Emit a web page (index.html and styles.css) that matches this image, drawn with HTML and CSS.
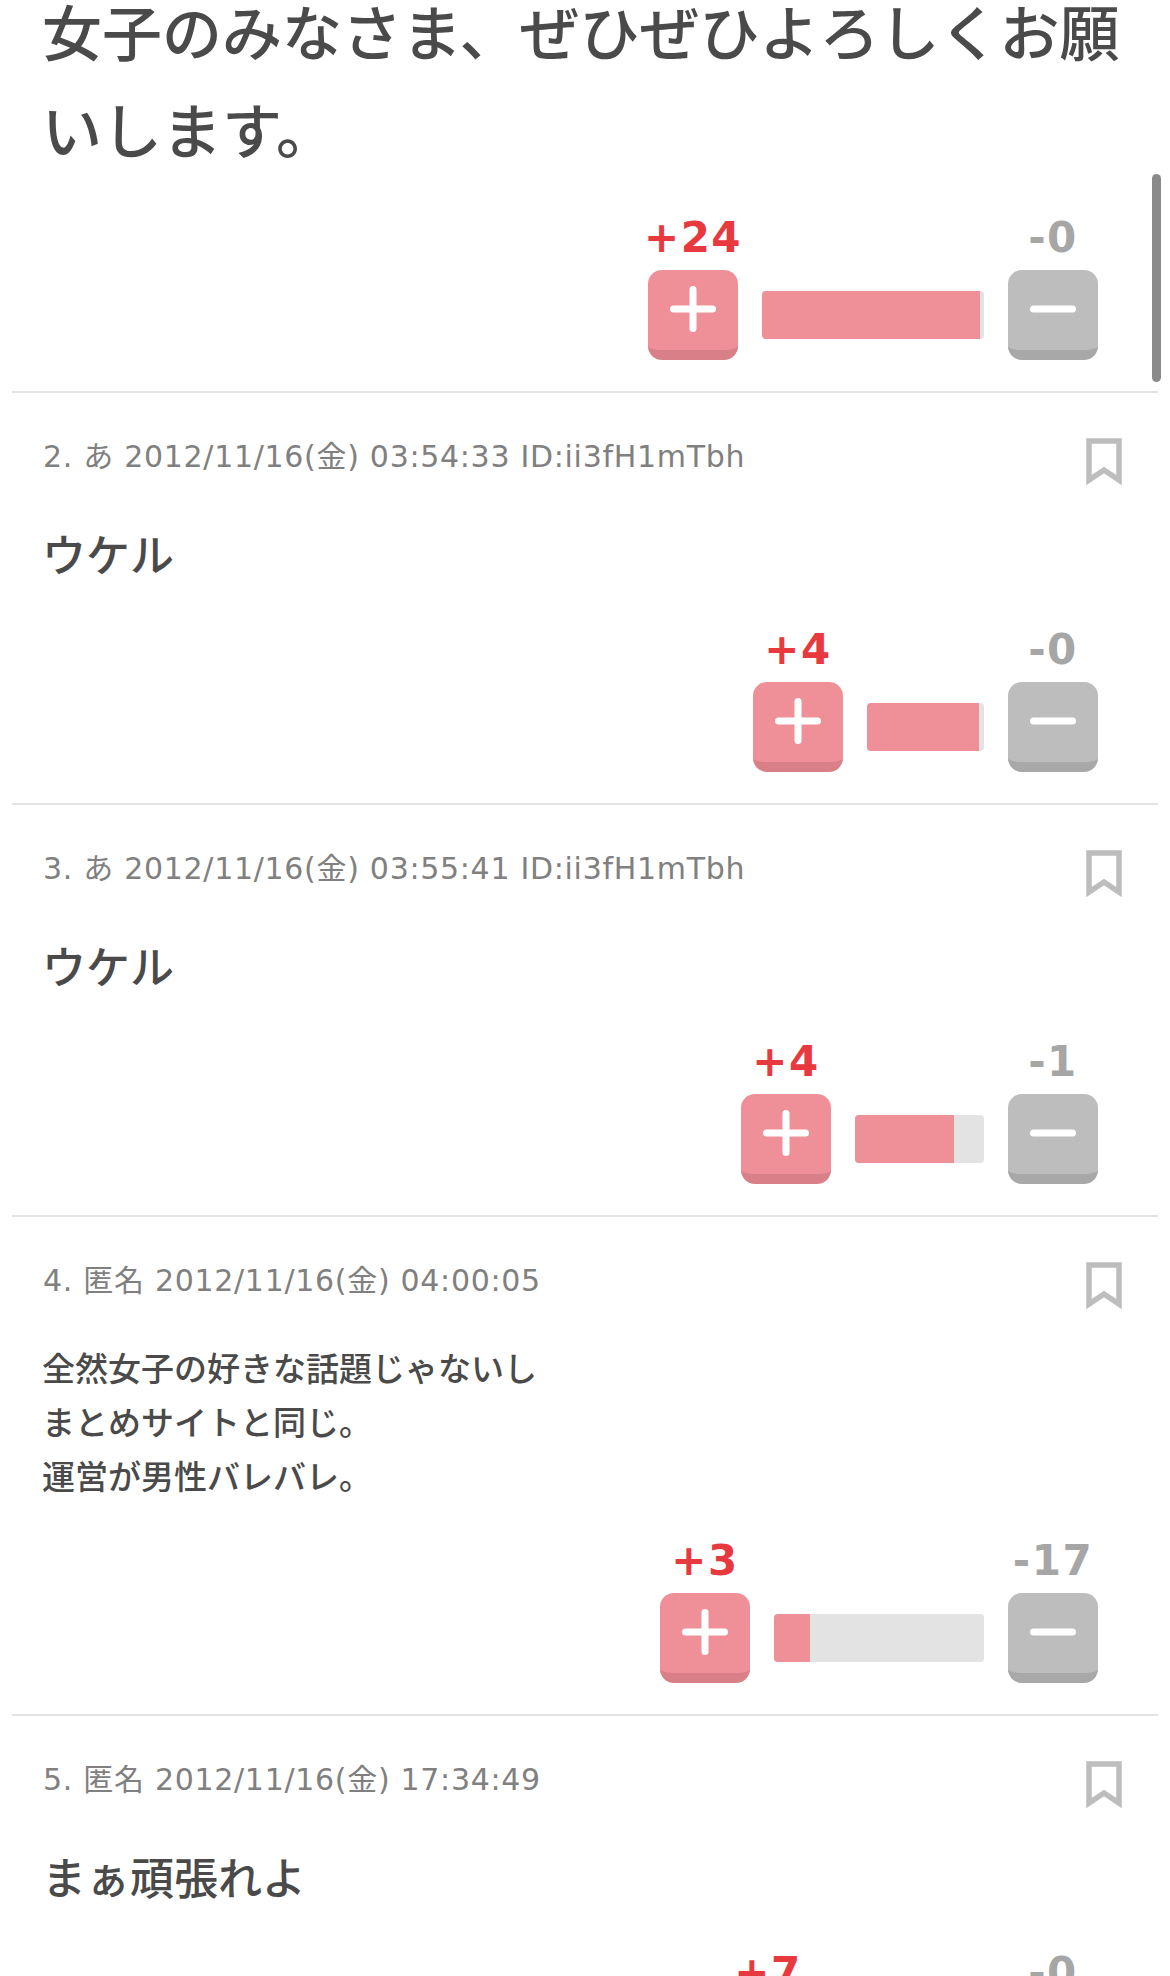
FILE: index.html
```html
<!DOCTYPE html>
<html lang="ja">
<head>
    <meta charset="UTF-8">
    <meta name="viewport" content="width=device-width, initial-scale=1.0">
    <title>コメント</title>
    <link rel="stylesheet" href="styles.css">
</head>
<body>
    <div class="scrollbar"></div>
    <main class="comments">
        <!-- 1件目 (スクロール済み) -->
        <article class="comment comment-first">
            <p class="comment-body body-title">女子のみなさま、ぜひぜひよろしくお願いします。</p>
            <div class="votes">
                <div class="vote plus">
                    <span class="vote-count">+24</span>
                    <button class="vote-btn"><svg viewBox="0 0 46 46"><path d="M23 3.5V42.5M3.5 23H42.5"/></svg></button>
                </div>
                <div class="vote-bar" style="width: 222px"><div class="vote-fill" style="width: 98%"></div></div>
                <div class="vote minus">
                    <span class="vote-count">-0</span>
                    <button class="vote-btn"><svg viewBox="0 0 46 46"><path d="M3.5 23H42.5"/></svg></button>
                </div>
            </div>
        </article>

        <article class="comment">
            <div class="comment-head">
                <span class="comment-info">2. あ 2012/11/16(金) 03:54:33 ID:ii3fH1mTbh</span>
                <svg class="bookmark" viewBox="0 0 36 48"><path d="M3 3H33V42L18 32L3 42Z"/></svg>
            </div>
            <p class="comment-body body-large">ウケル</p>
            <div class="votes">
                <div class="vote plus">
                    <span class="vote-count">+4</span>
                    <button class="vote-btn"><svg viewBox="0 0 46 46"><path d="M23 3.5V42.5M3.5 23H42.5"/></svg></button>
                </div>
                <div class="vote-bar" style="width: 117px"><div class="vote-fill" style="width: 96%"></div></div>
                <div class="vote minus">
                    <span class="vote-count">-0</span>
                    <button class="vote-btn"><svg viewBox="0 0 46 46"><path d="M3.5 23H42.5"/></svg></button>
                </div>
            </div>
        </article>

        <article class="comment">
            <div class="comment-head">
                <span class="comment-info">3. あ 2012/11/16(金) 03:55:41 ID:ii3fH1mTbh</span>
                <svg class="bookmark" viewBox="0 0 36 48"><path d="M3 3H33V42L18 32L3 42Z"/></svg>
            </div>
            <p class="comment-body body-large">ウケル</p>
            <div class="votes">
                <div class="vote plus">
                    <span class="vote-count">+4</span>
                    <button class="vote-btn"><svg viewBox="0 0 46 46"><path d="M23 3.5V42.5M3.5 23H42.5"/></svg></button>
                </div>
                <div class="vote-bar" style="width: 129px"><div class="vote-fill" style="width: 77%"></div></div>
                <div class="vote minus">
                    <span class="vote-count">-1</span>
                    <button class="vote-btn"><svg viewBox="0 0 46 46"><path d="M3.5 23H42.5"/></svg></button>
                </div>
            </div>
        </article>

        <article class="comment">
            <div class="comment-head">
                <span class="comment-info">4. 匿名 2012/11/16(金) 04:00:05</span>
                <svg class="bookmark" viewBox="0 0 36 48"><path d="M3 3H33V42L18 32L3 42Z"/></svg>
            </div>
            <p class="comment-body">全然女子の好きな話題じゃないし<br>まとめサイトと同じ。<br>運営が男性バレバレ。</p>
            <div class="votes">
                <div class="vote plus">
                    <span class="vote-count">+3</span>
                    <button class="vote-btn"><svg viewBox="0 0 46 46"><path d="M23 3.5V42.5M3.5 23H42.5"/></svg></button>
                </div>
                <div class="vote-bar" style="width: 210px"><div class="vote-fill" style="width: 17%"></div></div>
                <div class="vote minus">
                    <span class="vote-count">-17</span>
                    <button class="vote-btn"><svg viewBox="0 0 46 46"><path d="M3.5 23H42.5"/></svg></button>
                </div>
            </div>
        </article>

        <article class="comment">
            <div class="comment-head">
                <span class="comment-info">5. 匿名 2012/11/16(金) 17:34:49</span>
                <svg class="bookmark" viewBox="0 0 36 48"><path d="M3 3H33V42L18 32L3 42Z"/></svg>
            </div>
            <p class="comment-body body-large">まぁ頑張れよ</p>
            <div class="votes">
                <div class="vote plus">
                    <span class="vote-count">+7</span>
                    <button class="vote-btn"><svg viewBox="0 0 46 46"><path d="M23 3.5V42.5M3.5 23H42.5"/></svg></button>
                </div>
                <div class="vote-bar" style="width: 147px"><div class="vote-fill" style="width: 97%"></div></div>
                <div class="vote minus">
                    <span class="vote-count">-0</span>
                    <button class="vote-btn"><svg viewBox="0 0 46 46"><path d="M3.5 23H42.5"/></svg></button>
                </div>
            </div>
        </article>
    </main>
</body>
</html>
```

FILE: styles.css
```css
html, body {
    height: 1976px;
}

body {
    margin: 0;
    overflow: hidden;
    position: relative;
    background: #ffffff;
    color: #4a4a4a;
    font-family: "DejaVu Sans", "Noto Sans CJK JP", sans-serif;
}

.comments {
    margin-top: -14px;
    padding: 0 12px;
}

.comment {
    padding-top: 45px;
    padding-bottom: 31px;
    border-bottom: 2px solid #e3e3e3;
}

.comment-first {
    padding-top: 0;
}

.comment-head {
    display: flex;
    justify-content: space-between;
    align-items: flex-start;
    padding: 0 36px 0 31px;
}

.comment-info {
    font-size: 30px;
    line-height: 38px;
    letter-spacing: 0.7px;
    color: #808080;
}

.bookmark {
    width: 36px;
    height: 48px;
    fill: none;
    stroke: #bdbdbd;
    stroke-width: 5.5;
}

.comment-body {
    margin: 33px 0 30px;
    padding: 0 30px;
    font-size: 33px;
    line-height: 54px;
    font-weight: 500;
}

.body-large {
    margin: 35px 0 32px;
    font-size: 44px;
    line-height: 71px;
}

.body-title {
    margin: 0 0 30px;
    font-size: 60px;
    line-height: 98px;
}

.votes {
    display: flex;
    justify-content: flex-end;
    align-items: flex-end;
    gap: 24px;
    padding-right: 60px;
}

.vote {
    width: 90px;
    display: flex;
    flex-direction: column;
    align-items: center;
}

.vote-count {
    height: 50px;
    margin-bottom: 8px;
    font-size: 42px;
    line-height: 52px;
    letter-spacing: 1.5px;
    font-weight: bold;
    white-space: nowrap;
}

.plus .vote-count {
    color: #e8393f;
}

.minus .vote-count {
    color: #a6a6a6;
}

.vote-btn {
    width: 90px;
    height: 90px;
    padding: 0 0 2px;
    border: none;
    border-bottom: 10px solid;
    border-radius: 14px;
    display: flex;
    justify-content: center;
    align-items: center;
}

.plus .vote-btn {
    background: #ef9099;
    border-color: #d97f88;
}

.minus .vote-btn {
    background: #bdbdbd;
    border-color: #a8a8a8;
}

.vote-btn svg {
    width: 46px;
    height: 46px;
    fill: none;
    stroke: #ffffff;
    stroke-width: 7;
    stroke-linecap: round;
}

.vote-bar {
    height: 48px;
    margin-bottom: 21px;
    background: #e3e3e3;
    border-radius: 4px;
    overflow: hidden;
}

.vote-fill {
    height: 100%;
    background: #ef9099;
}

/* overlay scrollbar */
.scrollbar {
    position: absolute;
    top: 174px;
    left: 1152px;
    width: 9px;
    height: 208px;
    background: #8a8a8a;
    border-radius: 5px;
}
```
